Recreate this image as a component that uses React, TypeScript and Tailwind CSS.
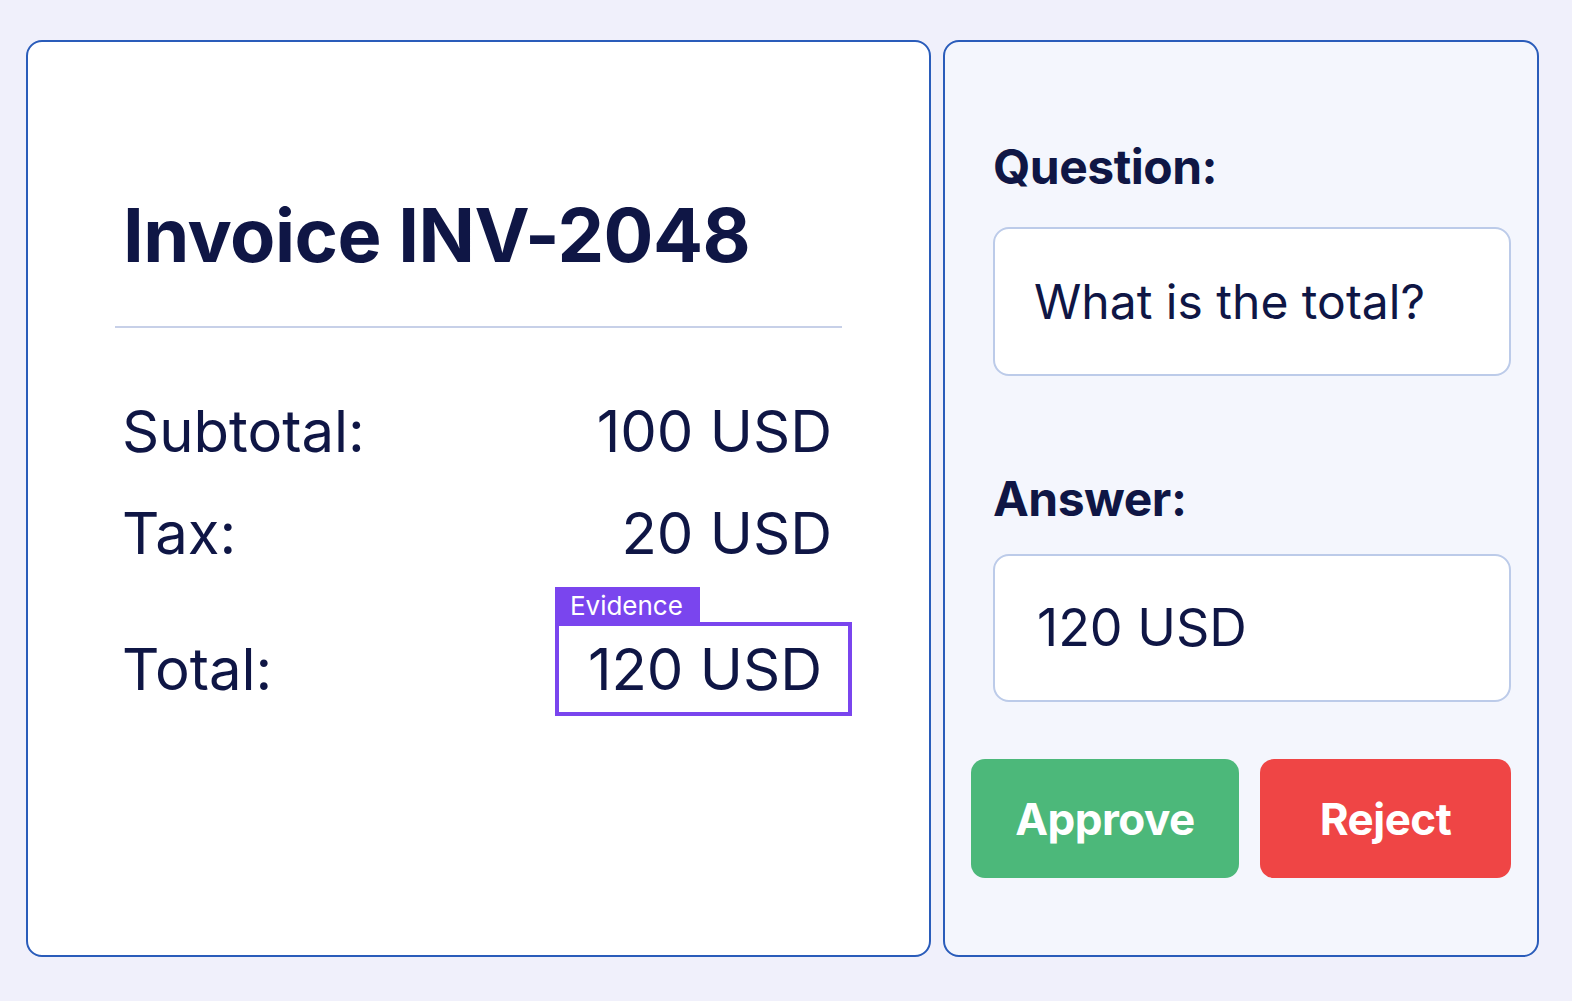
import React from "react";

export default function App() {
  return (
    <div
      className="w-full h-[1001px] bg-[#f0f0fb] flex gap-[12px] pt-[40px] pl-[26px] pr-[33px] pb-[44px] text-[#0f1645]"
      style={{ fontFamily: "Inter, 'Noto Sans', sans-serif" }}
    >
      {/* Left card: invoice */}
      <div className="w-[905px] h-[917px] shrink-0 border-2 border-[#2a5cba] rounded-[16px] bg-white px-[87px] pt-[156px] flex flex-col">
        <h1 className="pl-[8px] text-[74px] leading-none font-bold tracking-[-0.5px]">Invoice INV-2048</h1>
        <div className="mt-[54px] h-[2px] bg-[#c7d0e8]" />
        <div className="mt-[74px] pl-[7px] pr-[10px] flex justify-between items-center text-[58px] leading-none">
          <span>Subtotal:</span>
          <span>100 USD</span>
        </div>
        <div className="mt-[44px] pl-[7px] pr-[10px] flex justify-between items-center text-[58px] leading-none">
          <span>Tax:</span>
          <span>20 USD</span>
        </div>
        <div className="mt-[60px] pl-[7px] pr-[10px] flex justify-between items-center text-[58px] leading-none">
          <span>Total:</span>
          <div className="relative mr-[-20px] h-[94px] border-4 border-[#7a45ee] flex items-center pl-[29px] pr-[26px]">
            <span>120 USD</span>
            <div className="absolute left-[-4px] top-[-39px] h-[38px] w-[145px] bg-[#7a45ee] text-white text-[26px] leading-none flex items-center pl-[15px]">
              Evidence
            </div>
          </div>
        </div>
      </div>

      {/* Right card: Q&A */}
      <div className="flex-1 h-[917px] border-2 border-[#2a5cba] rounded-[16px] bg-[#f4f6fd] px-[26px] pt-[101px] flex flex-col">
        <div className="ml-[22px] text-[48px] leading-none font-bold tracking-[-0.5px]">Question:</div>
        <div className="ml-[22px] mt-[36px] h-[149px] rounded-[16px] border-2 border-[#bccbe9] bg-white flex items-center pl-[39px] text-[48px] leading-none">
          What is the total?
        </div>
        <div className="ml-[22px] mt-[99px] text-[48px] leading-none font-bold tracking-[-0.5px]">Answer:</div>
        <div className="ml-[22px] mt-[31px] h-[148px] rounded-[16px] border-2 border-[#bccbe9] bg-white flex items-center pl-[42px] text-[52px] leading-none">
          120 USD
        </div>
        <div className="mt-[57px] flex gap-[21px]">
          <button className="w-[268px] h-[119px] rounded-[14px] bg-[#4cb87a] text-white text-[44px] font-bold tracking-[-0.5px] leading-none">
            Approve
          </button>
          <button className="flex-1 h-[119px] rounded-[14px] bg-[#ef4545] text-white text-[44px] font-bold tracking-[-0.5px] leading-none">
            Reject
          </button>
        </div>
      </div>
    </div>
  );
}
